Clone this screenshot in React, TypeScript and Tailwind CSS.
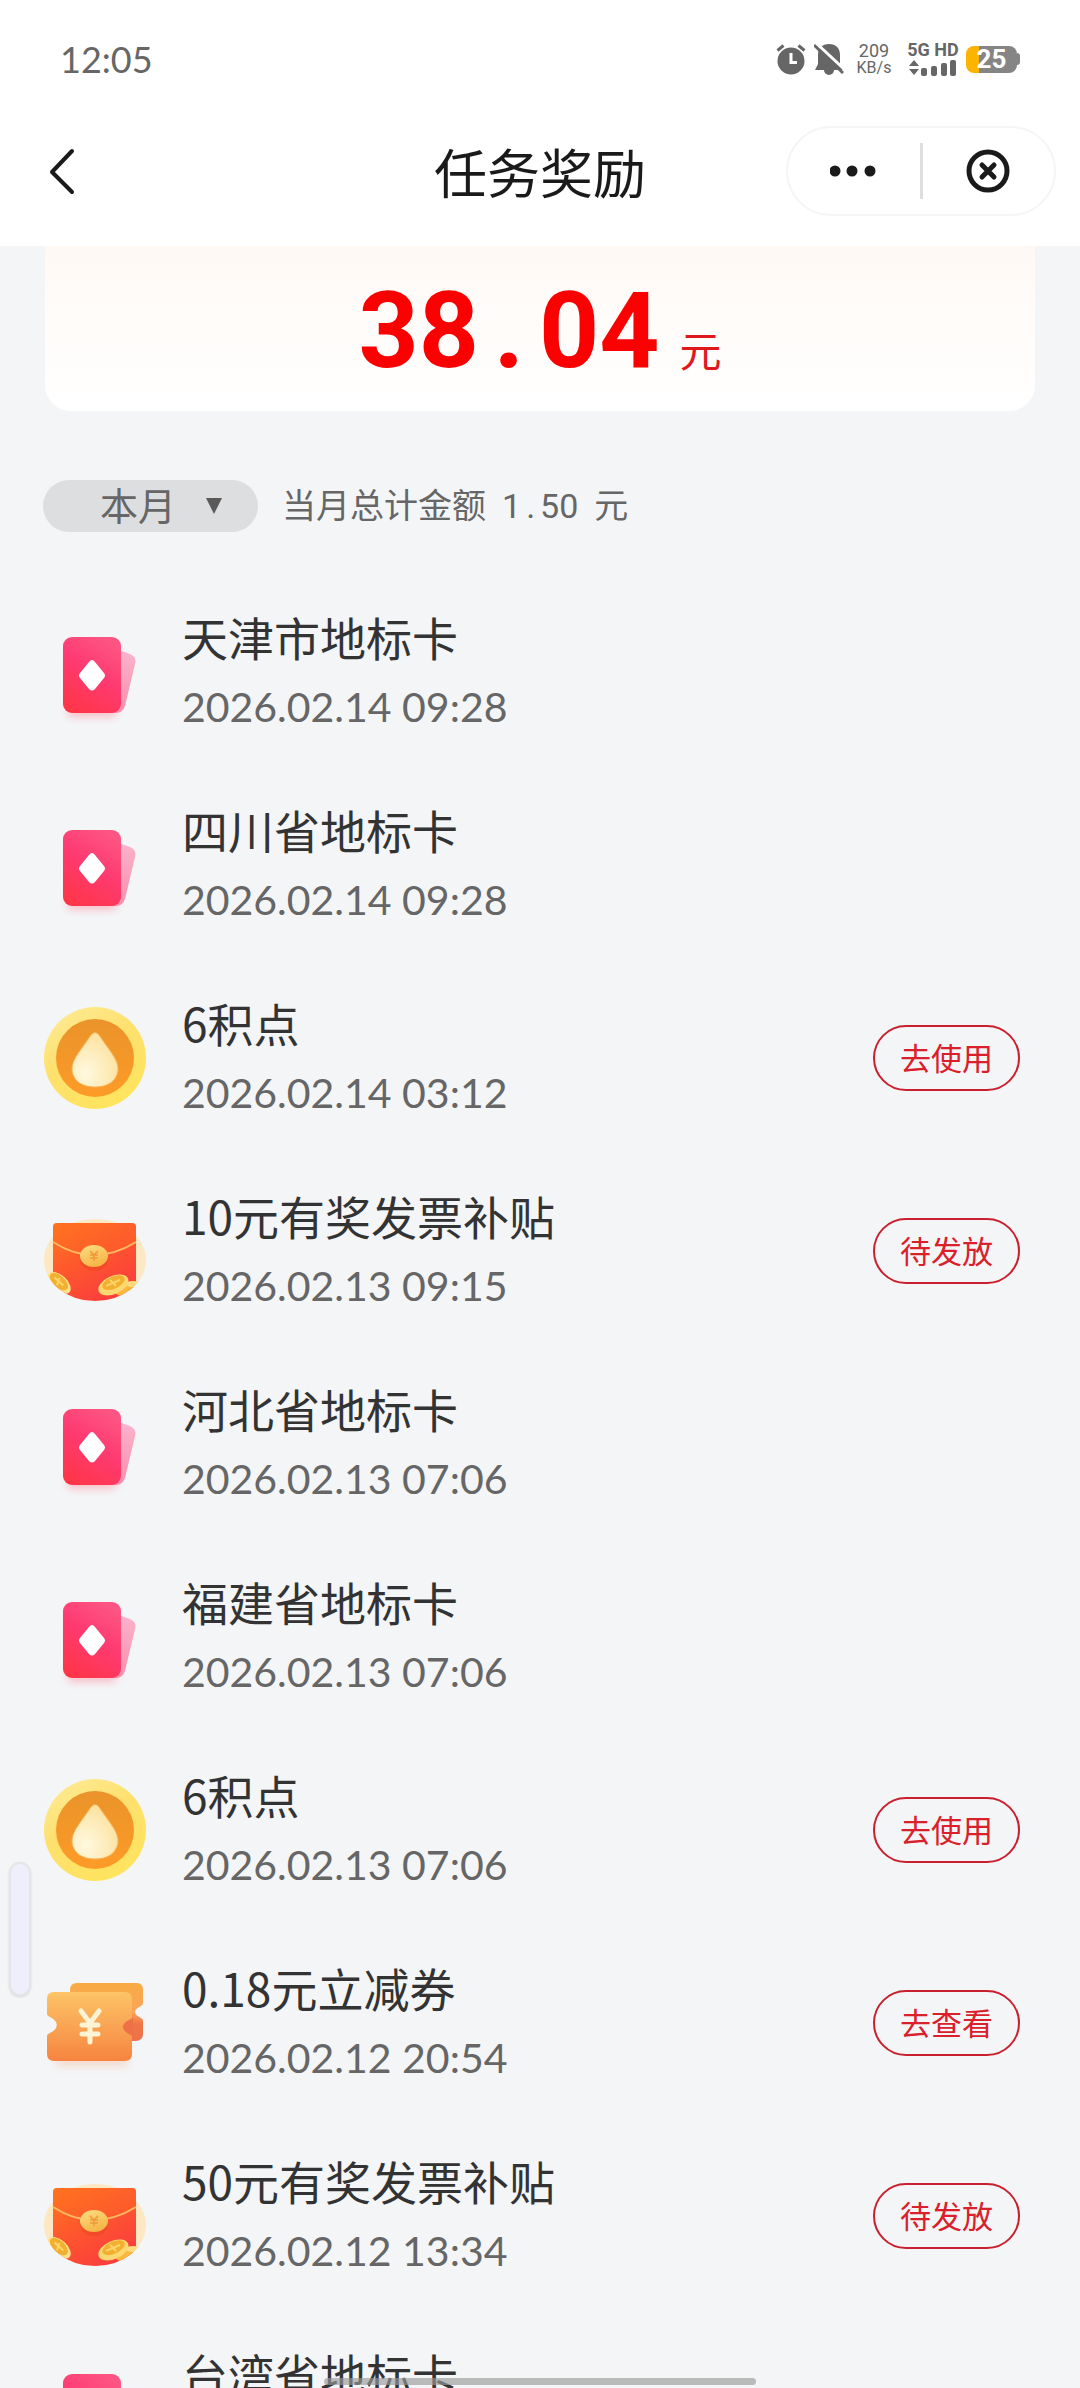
import { useId, useState } from 'react';

type RewardKind = 'card' | 'point' | 'envelope' | 'coupon';

interface Reward {
  id: number;
  kind: RewardKind;
  title: string;
  time: string;
  action?: string;
}

const rewards: Reward[] = [
  { id: 1, kind: 'card', title: '天津市地标卡', time: '2026.02.14 09:28' },
  { id: 2, kind: 'card', title: '四川省地标卡', time: '2026.02.14 09:28' },
  { id: 3, kind: 'point', title: '6积点', time: '2026.02.14 03:12', action: '去使用' },
  { id: 4, kind: 'envelope', title: '10元有奖发票补贴', time: '2026.02.13 09:15', action: '待发放' },
  { id: 5, kind: 'card', title: '河北省地标卡', time: '2026.02.13 07:06' },
  { id: 6, kind: 'card', title: '福建省地标卡', time: '2026.02.13 07:06' },
  { id: 7, kind: 'point', title: '6积点', time: '2026.02.13 07:06', action: '去使用' },
  { id: 8, kind: 'coupon', title: '0.18元立减券', time: '2026.02.12 20:54', action: '去查看' },
  { id: 9, kind: 'envelope', title: '50元有奖发票补贴', time: '2026.02.12 13:34', action: '待发放' },
  { id: 10, kind: 'card', title: '台湾省地标卡', time: '2026.02.12 13:34' },
];

const CardIcon = () => {
  const id = useId();
  return (
    <svg viewBox="0 0 104 104" className="size-[104px]" aria-hidden="true">
      <defs>
        <linearGradient id={`${id}front`} x1="0.7" y1="0" x2="0.2" y2="1">
          <stop offset="0" stopColor="#fd5583" />
          <stop offset="0.45" stopColor="#fe3a71" />
          <stop offset="1" stopColor="#ff3547" />
        </linearGradient>
        <linearGradient id={`${id}back`} x1="0" y1="0" x2="0" y2="1">
          <stop offset="0" stopColor="#fbb3cb" />
          <stop offset="1" stopColor="#f98fae" />
        </linearGradient>
        <filter id={`${id}blur`} x="-30%" y="-100%" width="160%" height="300%">
          <feGaussianBlur stdDeviation="4" />
        </filter>
      </defs>
      <rect x="24" y="84" width="50" height="13" rx="6" fill="#ff5a6e" opacity="0.35" filter={`url(#${id}blur)`} />
      <path d="M70 30h6l11 4q7 3 5 10L82 86q-2 6-8 7h-6z" fill={`url(#${id}back)`} />
      <rect x="20" y="17" width="58" height="76" rx="9" fill={`url(#${id}front)`} />
      <path d="M46 42q3-4 6 0l9 11q2 2.500 0 5l-9 11q-3 3-6 0l-9-11q-2-2.500 0-5z" fill="#fff" />
    </svg>
  );
};

const PointIcon = () => {
  const id = useId();
  return (
    <svg viewBox="0 0 104 104" className="size-[104px]" aria-hidden="true">
      <defs>
        <linearGradient id={`${id}ring`} x1="0" y1="0" x2="0.6" y2="1">
          <stop offset="0" stopColor="#fdec9a" />
          <stop offset="0.5" stopColor="#fee06e" />
          <stop offset="1" stopColor="#fee45f" />
        </linearGradient>
        <linearGradient id={`${id}core`} x1="0" y1="0" x2="0" y2="1">
          <stop offset="0" stopColor="#ea932a" />
          <stop offset="1" stopColor="#fd9b27" />
        </linearGradient>
        <radialGradient id={`${id}drop`} cx="0.3" cy="0.75" r="0.8">
          <stop offset="0" stopColor="#fff9df" />
          <stop offset="0.6" stopColor="#fdebb8" />
          <stop offset="1" stopColor="#fde09a" />
        </radialGradient>
      </defs>
      <circle cx="52" cy="52" r="51" fill={`url(#${id}ring)`} />
      <circle cx="52" cy="52" r="39" fill={`url(#${id}core)`} />
      <path d="M48 29q4-5 8 0l12 17q8 11 7 19c-2 11-11 16-23 16s-21-5-23-16q-1-8 7-19z" fill={`url(#${id}drop)`} stroke="#f6b457" strokeWidth="1" />
    </svg>
  );
};

const EnvelopeIcon = () => {
  const id = useId();
  return (
    <svg viewBox="0 0 104 104" className="size-[104px]" aria-hidden="true">
      <defs>
        <linearGradient id={`${id}body`} x1="0" y1="0" x2="0.6" y2="1">
          <stop offset="0" stopColor="#ff7a1c" />
          <stop offset="0.45" stopColor="#fe5a2c" />
          <stop offset="1" stopColor="#fb3d3d" />
        </linearGradient>
        <linearGradient id={`${id}gold`} x1="0" y1="0" x2="0.5" y2="1">
          <stop offset="0" stopColor="#fddf85" />
          <stop offset="1" stopColor="#f6b545" />
        </linearGradient>
        <clipPath id={`${id}clip`}>
          <path d="M0 10h104v51h-1a51 41 0 0 1-102 0h-1z" />
        </clipPath>
      </defs>
      <ellipse cx="52" cy="61" rx="51" ry="41" fill="#fde8c4" />
      <g clipPath={`url(#${id}clip)`}>
        <path d="M14 24h75q4 0 4 4v55l-12 22H10V28q0-4 4-4z" fill={`url(#${id}body)`} />
        <path d="M10 45V28q0-4 4-4h75q4 0 4 4v17Q73 57 51 57T10 45z" fill="#ff6a26" opacity="0.4" />
        <path d="M10 43Q30 56 51 56t42-13" fill="none" stroke="#fdb661" strokeWidth="2" />
        <ellipse cx="51" cy="60" rx="14" ry="12" fill="#d93a18" opacity="0.3" />
        <g transform="rotate(42 16 84)">
          <ellipse cx="16" cy="84" rx="14" ry="8" fill="#fde08a" />
          <ellipse cx="15" cy="83" rx="11" ry="6" fill="#f3b030" />
          <path d="M9 83h12M13 80l3 7" stroke="#fbd56c" strokeWidth="2" />
        </g>
        <ellipse cx="84" cy="91" rx="12" ry="6" fill="#f9b93f" transform="rotate(-10 84 91)" />
        <ellipse cx="90" cy="85" rx="8" ry="3" fill="#fddc80" />
        <g transform="rotate(-24 70 85)">
          <ellipse cx="70" cy="86" rx="16" ry="9" fill="#fdd870" />
          <ellipse cx="71" cy="84" rx="12" ry="6" fill="#f3b030" />
          <path d="M63 84h15M69 80l3 8" stroke="#fbd56c" strokeWidth="2" />
        </g>
      </g>
      <ellipse cx="51" cy="57" rx="14" ry="11" fill={`url(#${id}gold)`} />
      <path d="M47 52l4 4 4-4M51 56v6M47 56h8M47 59h8" fill="none" stroke="#ee9a3a" strokeWidth="1.500" />
    </svg>
  );
};

const CouponIcon = () => {
  const id = useId();
  return (
    <svg viewBox="0 0 104 104" className="size-[104px]" aria-hidden="true">
      <defs>
        <linearGradient id={`${id}front`} x1="0" y1="0" x2="0" y2="1">
          <stop offset="0" stopColor="#fdc466" />
          <stop offset="1" stopColor="#f68440" />
        </linearGradient>
        <linearGradient id={`${id}back`} x1="0" y1="0" x2="0" y2="1">
          <stop offset="0" stopColor="#f8ab43" />
          <stop offset="0.5" stopColor="#fba55a" />
          <stop offset="0.7" stopColor="#ee7848" />
          <stop offset="1" stopColor="#ee7048" />
        </linearGradient>
        <filter id={`${id}blur`} x="-30%" y="-100%" width="160%" height="300%">
          <feGaussianBlur stdDeviation="4" />
        </filter>
      </defs>
      <rect x="12" y="86" width="74" height="9" rx="4" fill="#f68440" opacity="0.25" filter={`url(#${id}blur)`} />
      <path d="M34 12h60q6 0 6 7v13q0 2-2 3c-8 4-8 8 0 12q2 1 2 3v13q0 7-8 7H34q-7 0-7-8V19q0-7 7-7z" fill={`url(#${id}back)`} />
      <path d="M11 21h71q7 0 7 7v55q0 7-7 7H11q-7 0-7-7V65q0-2 3-3c9-4 9-12 0-16q-3-1-3-3V28q0-7 7-7z" fill={`url(#${id}front)`} />
      <path d="M90 46q-1 2-4 3-6 3-6 7t6 7q3 1 4 4z" fill="#ed7047" />
      <path d="M38 40l9 12 9-12M47 52v19M39 54h16M39 63h16" fill="none" stroke="#fff3d6" strokeWidth="5" strokeLinecap="round" />
    </svg>
  );
};

const icons: Record<RewardKind, () => React.JSX.Element> = {
  card: CardIcon,
  point: PointIcon,
  envelope: EnvelopeIcon,
  coupon: CouponIcon,
};

const StatusBar = () => (
  <div className="flex h-24 items-center justify-between px-[60px] pt-[22px] text-[#666]">
    <span className="font-['Lato',sans-serif] text-[36px] leading-none">12:05</span>
    <div className="flex items-center">
      <svg viewBox="0 0 30 32" className="mr-2 h-8 w-[30px]" aria-hidden="true">
        <circle cx="15" cy="18" r="13.500" fill="#666" />
        <path d="M1.500 7.500l6-5M28.500 7.500l-6-5" stroke="#666" strokeWidth="3" />
        <path d="M15 10v9.500h6" fill="none" stroke="#fff" strokeWidth="3" />
      </svg>
      <svg viewBox="0 0 30 32" className="mr-3 h-8 w-[30px]" aria-hidden="true">
        <path d="M15 1c7 0 11 4 11 11v9l3 6H1l3-6v-9C4 5 8 1 15 1z" fill="#666" />
        <path d="M10 27a5 5 0 0 0 10 0z" fill="#666" />
        <path d="M2 0l29 27" stroke="#fff" strokeWidth="3" />
        <path d="M0 2l29 28" stroke="#666" strokeWidth="3" />
      </svg>
      <div className="mr-4 flex w-9 flex-col items-center font-['Roboto',sans-serif]">
        <span className="text-[18px] leading-[17px]">209</span>
        <span className="text-[16px] leading-[17px]">KB/s</span>
      </div>
      <div className="mr-2 flex w-[50px] flex-col items-center gap-px">
        <span className="font-['Roboto',sans-serif] text-[18px] leading-4 font-bold whitespace-nowrap">5G HD</span>
        <svg viewBox="0 0 50 18" className="h-[18px] w-[50px]" aria-hidden="true">
          <path d="M1 7l5-6 5 6zM1 10l5 6 5-6z" fill="#666" />
          <rect x="13" y="9" width="6" height="8" rx="2" fill="#666" />
          <rect x="23" y="7" width="6" height="10" rx="2" fill="#666" />
          <rect x="33" y="4" width="6" height="13" rx="2" fill="#666" />
          <rect x="42" y="1" width="6" height="16" rx="2" fill="#666" />
        </svg>
      </div>
      <div className="flex items-center">
        <span className="flex h-[27px] w-[51px] items-center justify-center rounded-lg bg-linear-to-r from-[#fdb400] from-25% to-[#858585] to-25% font-['Roboto',sans-serif] text-[26px] leading-none font-bold text-white">
          25
        </span>
        <span className="h-3 w-[3px] rounded-r-sm bg-[#858585]" />
      </div>
    </div>
  </div>
);

const NavBar = () => (
  <header className="grid h-[150px] grid-cols-3 items-center px-6">
    <button type="button" aria-label="返回" className="ml-6 justify-self-start">
      <svg viewBox="0 0 28 48" className="h-12 w-7" fill="none" stroke="#1a1a1a" strokeWidth="4" strokeLinecap="round" strokeLinejoin="round">
        <path d="M24 4L4 25l20 20" />
      </svg>
    </button>
    <h1 className="text-center text-[53px] leading-none whitespace-nowrap text-[#1a1a1a]">任务奖励</h1>
    <div className="flex h-[90px] w-[270px] items-center justify-self-end rounded-full border-2 border-[#f5f5f5]">
      <button type="button" aria-label="更多" className="flex flex-1 justify-center">
        <svg viewBox="0 0 48 12" className="h-3 w-12" fill="#1a1a1a">
          <circle cx="5" cy="6" r="5.500" />
          <circle cx="22" cy="6" r="5.500" />
          <circle cx="40" cy="6" r="5.500" />
        </svg>
      </button>
      <span className="h-14 w-[3px] bg-[#dedede]" />
      <button type="button" aria-label="关闭" className="flex flex-1 justify-center">
        <svg viewBox="0 0 44 44" className="size-11" fill="none" stroke="#1a1a1a" strokeWidth="5">
          <circle cx="22" cy="22" r="19" />
          <path d="M16 16l12 12M28 16L16 28" strokeLinecap="round" />
        </svg>
      </button>
    </div>
  </header>
);

const RewardRow = ({ kind, title, time, action }: Omit<Reward, 'id'>) => {
  const Icon = icons[kind];
  return (
    <li className="flex h-[193px] items-center">
      <Icon />
      <div className="ml-[35px] flex-1 pt-1">
        <p className="text-[46px] leading-[66px] text-[#333]">{title}</p>
        <p className="font-['Lato',sans-serif] text-[41px] leading-[76px] text-[#666]">{time}</p>
      </div>
      {action && (
        <button type="button" className="h-[66px] w-[147px] rounded-full border-2 border-[#c8202f] pb-0.5 text-[31px] leading-none text-[#d9202b]">
          {action}
        </button>
      )}
    </li>
  );
};

const App = () => {
  const [month, setMonth] = useState('this');

  return (
    <div className="relative flex h-screen flex-col overflow-hidden bg-[#f4f5f7] font-['Noto_Sans_CJK_SC',sans-serif]">
      <div className="shrink-0 bg-white">
        <StatusBar />
        <NavBar />
      </div>

      <main className="min-h-0 flex-1 overflow-hidden">
        <section className="mx-[45px] flex h-[165px] items-baseline justify-center rounded-b-[26px] bg-linear-to-b from-[#fff9f5] to-white pt-6 leading-[123px]">
          <span className="font-['Roboto',sans-serif] text-[105px] font-bold text-[#fb0000]">
            38<span className="inline-block w-[60px] text-center">.</span>04
          </span>
          <span className="ml-5 text-[42px] text-[#e0181c]">元</span>
        </section>

        <div className="mt-[69px] flex h-[52px] items-center pl-[43px] text-[#666]">
          <div className="relative">
            <select
              aria-label="月份"
              value={month}
              onChange={(e) => setMonth(e.target.value)}
              className="h-[52px] w-[215px] appearance-none rounded-full bg-[#dddee0] pb-1 pl-[57px] text-[38px] leading-[48px]"
            >
              <option value="this">本月</option>
              <option value="last">上月</option>
            </select>
            <svg viewBox="0 0 16 16" className="pointer-events-none absolute top-[18px] right-9 size-4" fill="#5a5a5a" aria-hidden="true">
              <path d="M0 0h16L8 16z" />
            </svg>
          </div>
          <p className="ml-6 flex items-baseline pb-0.5 text-[34px] leading-[50px]">
            当月总计金额
            <span className="mx-4 font-['Roboto',sans-serif]">
              1<span className="inline-block w-[19px] text-center">.</span>50
            </span>
            元
          </p>
        </div>

        <ul className="mt-[43px] pr-[60px] pl-[43px]">
          {rewards.map(({ id, ...reward }) => (
            <RewardRow key={id} {...reward} />
          ))}
        </ul>
      </main>

      {/* edge handle and home indicator */}
      <div className="absolute top-[1862px] left-[9px] h-[134px] w-[22px] rounded-full border-2 border-[#e5e6e9] bg-[#eeeffb] shadow-sm" />
      <div className="absolute inset-x-0 bottom-[3px] mx-auto h-[7px] w-2/5 rounded-full bg-[#9a9a9a]/65" />
    </div>
  );
};

export default App;
